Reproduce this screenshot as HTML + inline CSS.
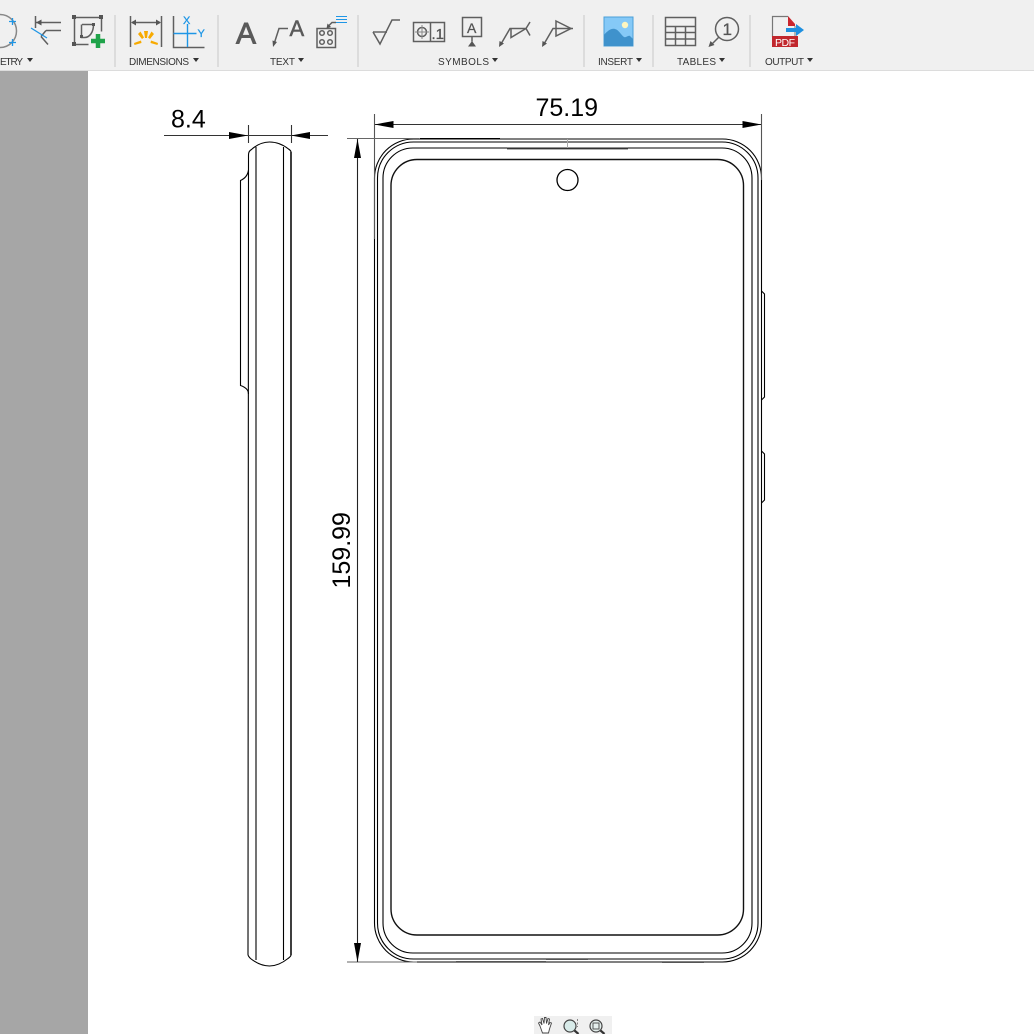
<!DOCTYPE html>
<html>
<head>
<meta charset="utf-8">
<style>
html,body{margin:0;padding:0;background:#fff;width:1034px;height:1034px;overflow:hidden}
svg{display:block}
text{font-family:"Liberation Sans",sans-serif}
.lab{font-size:10px;fill:#333}
.g{fill:none;stroke:#5f5f5f;stroke-width:1.5}
</style>
</head>
<body>
<svg width="1034" height="1034" viewBox="0 0 1034 1034" xmlns="http://www.w3.org/2000/svg">
<rect width="1034" height="1034" fill="#fff"/>
<rect x="0" y="0" width="1034" height="70" fill="#f0f0f0"/>
<rect x="0" y="70" width="1034" height="1" fill="#dcdcdc"/>
<rect x="0" y="71" width="88" height="963" fill="#a6a6a6"/>

<!-- separators -->
<g fill="#dcdcdc">
<rect x="114" y="15" width="2" height="52"/><rect x="217" y="15" width="2" height="52"/><rect x="357" y="15" width="2" height="52"/>
<rect x="583" y="15" width="2" height="52"/><rect x="652" y="15" width="2" height="52"/><rect x="749" y="15" width="2" height="52"/>
</g>

<!-- labels -->
<text class="lab" x="0" y="65" textLength="23">ETRY</text>
<text class="lab" x="129" y="65" textLength="60">DIMENSIONS</text>
<text class="lab" x="270" y="65" textLength="25">TEXT</text>
<text class="lab" x="438" y="65" textLength="51">SYMBOLS</text>
<text class="lab" x="598" y="65" textLength="35">INSERT</text>
<text class="lab" x="677" y="65" textLength="39">TABLES</text>
<text class="lab" x="765" y="65" textLength="39">OUTPUT</text>
<g fill="#333">
<path d="M27 58h6l-3 4z"/><path d="M193 58h6l-3 4z"/><path d="M298 58h6l-3 4z"/><path d="M492 58h6l-3 4z"/>
<path d="M636 58h6l-3 4z"/><path d="M719 58h6l-3 4z"/><path d="M807 58h6l-3 4z"/>
</g>

<!-- geometry icons -->
<circle cx="0" cy="31" r="16.500" fill="none" stroke="#888" stroke-width="1.500"/>
<path d="M12.500 18v7M9 21.500h7M12.500 39v7M9 42.500h7" stroke="#1e96e6" stroke-width="1.300" fill="none"/>
<path d="M35.500 16v12M36 22.500h25M46 30.500h15M46 30.500l-5 6M41 36.500l7 8" class="g"/>
<path d="M36 22.500l5.500-3v6z" fill="#555"/>
<path d="M31 28l16 10" stroke="#1e96e6" stroke-width="1.300"/>
<path d="M74.500 17.500h27v14M74.500 17.500v27h14" class="g"/>
<path d="M82 24.500h11M81.500 24.500v13h3c5 0 9-5 9-13" class="g"/>
<g fill="#555"><rect x="72" y="15" width="4" height="4"/><rect x="99" y="15" width="4" height="4"/><rect x="72" y="42" width="4" height="4"/><rect x="80" y="35" width="3" height="3"/><rect x="92" y="23" width="3" height="3"/></g>
<path d="M91 41h14M98 34v14" stroke="#1fa34a" stroke-width="4.500"/>

<!-- dimensions icons -->
<path d="M130.500 16v31M161.500 16v31M132 22.500h28" class="g"/>
<path d="M131 22.500l5-3v6zM161 22.500l-5-3v6z" fill="#555"/>
<g fill="#f7aa00"><path d="M144 31h4l-1 7h-2z"/><path d="M138 34l2.500-2.500 3.500 6-2 1.500z"/><path d="M154 34l-2.500-2.500-3.500 6 2 1.500z"/><path d="M134 43l7-2.500.5 2.500-7 2z"/><path d="M158 43l-7-2.500-.5 2.500 7 2z"/></g>
<path d="M173.500 16v31.500h31" class="g"/>
<path d="M187.500 24v23M173.500 33.500h23" stroke="#1e96e6" stroke-width="1.400" fill="none"/>
<text x="183" y="24" font-size="11" fill="#1e96e6" stroke="#1e96e6" stroke-width=".3">X</text>
<text x="197.500" y="37" font-size="11" fill="#1e96e6" stroke="#1e96e6" stroke-width=".3">Y</text>

<!-- text icons -->
<text x="236" y="43.500" font-size="30" fill="#5a5a5a" stroke="#5a5a5a" stroke-width=".9">A</text>
<text x="289.500" y="36" font-size="22" fill="#5a5a5a" stroke="#5a5a5a" stroke-width=".5">A</text>
<path d="M288 28.500h-9l-4.500 14" class="g"/>
<path d="M273 47l-.5-6.500 4.500 1.500z" fill="#555"/>
<rect x="317" y="28.500" width="18.500" height="19" class="g"/>
<g class="g"><circle cx="322" cy="33" r="2.300"/><circle cx="330" cy="33" r="2.300"/><circle cx="322" cy="42" r="2.300"/><circle cx="330" cy="42" r="2.300"/></g>
<path d="M336 16.500h11M336 19.500h11M336 22.500h11" stroke="#1e96e6" stroke-width="1"/>
<path d="M336 22.500h-4l-4 4" class="g"/>
<path d="M326.500 28.500l1-5 3.500 3.500z" fill="#555"/>

<!-- symbols -->
<path d="M373 32h14" stroke="#888" stroke-width="2"/>
<path d="M373 32l7 12 12-24h8" class="g"/>
<rect x="413.500" y="22.500" width="31" height="19" class="g"/>
<path d="M430.500 22.500v19" class="g"/>
<circle cx="422" cy="32" r="4.500" class="g"/>
<path d="M422 25v14M415 32h14" stroke="#888" stroke-width="1"/>
<text x="431.500" y="39" font-size="15" fill="#555" stroke="#555" stroke-width=".3">.1</text>
<rect x="462.500" y="17.500" width="19" height="19" class="g"/>
<text x="467" y="33" font-size="14" fill="#555" stroke="#555" stroke-width=".3">A</text>
<path d="M472 36.500v5" class="g"/>
<path d="M468 46.500l4-5.500 4 5.500z" fill="#555"/>
<path d="M501 44l9-15.500h16" class="g"/>
<path d="M499 47l.5-6 4.500 2.500z" fill="#555"/>
<path d="M511 28.500v9l15-9M526 28.500l4-6.500M526 28.500l4 7" class="g"/>
<path d="M544 44l9-15.500h20" class="g"/>
<path d="M542 47l.5-6 4.500 2.500z" fill="#555"/>
<path d="M556 21l15 7.500-15 7.500z" class="g"/>

<!-- insert -->
<rect x="604" y="17" width="29" height="29" fill="#85c9f7" stroke="#4a9fd8"/>
<circle cx="625" cy="25" r="3.200" fill="#fdf6c0"/>
<path d="M604 35c4-5 8-7 11-6 4 1 6 6 9 8 2 1 4-2 6-1l3 3v7h-29z" fill="#3f92cc"/>

<!-- tables -->
<rect x="665.500" y="17.500" width="30" height="28" class="g"/>
<path d="M665.500 26.500h30M665.500 32.500h30M665.500 39h30M675.500 26.500v19M685.500 26.500v19" class="g"/>
<circle cx="727" cy="29" r="11.500" class="g"/>
<text x="722.500" y="35" font-size="17" fill="#555" stroke="#555" stroke-width=".3">1</text>
<path d="M719 37l-8 8" class="g"/>
<path d="M708.500 47l2-6 4 4z" fill="#555"/>

<!-- output -->
<path d="M772.500 37V16.500h15.500" stroke="#777" stroke-width="1.200" fill="none"/>
<path d="M788 16l7 8v2h-7z" fill="#c9252d"/>
<path d="M795 26v10" stroke="#777" stroke-width="1"/>
<rect x="772" y="36" width="26" height="11" fill="#c1272d"/>
<text x="775" y="46" font-size="10.500" fill="#fff" textLength="20">PDF</text>
<path d="M786 28h10v-4l8 6-8 6v-4h-10z" fill="#1e90e0"/>

<!-- side view -->
<g fill="none" stroke="#000" stroke-width="1.100">
<path d="M248.500 155c0-3 1-4.500 3-5.500 5-4.500 11-7.500 18-7.500s14 3 19 7c1.500 1 2.500 2 2.500 3v803c0 1-1 2-3 3.500-5 4-11 7.500-18.500 7.500s-14-3.500-19-7.500c-1.500-1.500-2.500-2.500-2.500-4z"/>
<path d="M248.500 170c-.5 4-2.500 8-8 10.500v205c3 1 8 3 8 8.500"/>
<path d="M256 147v813M283.500 147v813"/>
</g>
<path d="M291 152v803" stroke="#222" stroke-width="1.700"/>

<!-- dim 8.4 -->
<path d="M164 135.500h164M248.500 125v18M291.500 125v18" stroke="#333" stroke-width="1.100" fill="none"/>
<path d="M248 135.500l-19-3.500v7zM291 135.500l19-3.500v7z" fill="#000"/>
<text x="171" y="127.500" font-size="25" fill="#000">8.4</text>

<!-- front view -->
<g fill="none" stroke="#000" stroke-width="1.100">
<rect x="374.500" y="139" width="387" height="823" rx="39" ry="39"/>
<rect x="377.500" y="142" width="380.500" height="817" rx="36" ry="36"/>
<rect x="383" y="148" width="369" height="805" rx="30" ry="30"/>
</g>
<rect x="391" y="159.500" width="352.500" height="775.500" rx="26" ry="26" fill="none" stroke="#111" stroke-width="1.400"/>
<circle cx="567.500" cy="180" r="10.500" fill="none" stroke="#000" stroke-width="1.300"/>
<path d="M420 138.700h80" stroke="#000" stroke-width="1.400"/>
<path d="M507 148.500h121" stroke="#333" stroke-width="1.800"/>
<path d="M567.500 139v9" stroke="#aaa" stroke-width="1"/>
<path d="M456 961.500h90M546 959.500h42M662 962.500h42" stroke="#555" stroke-width="1"/>
<!-- buttons -->
<g fill="none" stroke="#000" stroke-width="1.100">
<path d="M761.500 291l3 3v103l-3 3"/>
<path d="M761.500 451l3 3v46l-3 3"/>
</g>

<!-- dim 75.19 -->
<path d="M374.500 114v125M761.500 114v66" stroke="#555" stroke-width="1.100" fill="none"/>
<path d="M375 124.500h386" stroke="#333" stroke-width="1.100"/>
<path d="M374.500 124.500l19-3.500v7zM761.500 124.500l-19-3.500v7z" fill="#000"/>
<text x="535.500" y="116" font-size="25" fill="#000">75.19</text>

<!-- dim 159.99 -->
<path d="M347 138.500h72M347 962h70" stroke="#666" stroke-width="1.100" fill="none"/>
<path d="M357.500 139v823" stroke="#222" stroke-width="1.100"/>
<path d="M357.500 139l-3.500 19h7zM357.500 962l-3.500-19h7z" fill="#000"/>
<text transform="translate(350 588.500) rotate(-90)" font-size="25" fill="#000">159.99</text>

<!-- bottom nav -->
<rect x="534" y="1016" width="78" height="18" fill="#f0f0f0"/>
<path d="M540 1026l-1.500-3 1.500-1 2 3-1-6 1.500-.5 1.500 5 .5-6h1.500l.5 6 1.500-5 1.500.5-1 6 1.500-2.500 1.500.5-2 6-1 4h-6z" fill="#fff" stroke="#444" stroke-width=".9"/>
<circle cx="570" cy="1026" r="6" fill="#d8ebe9" stroke="#444" stroke-width="1.200"/>
<path d="M574.500 1030.500l4 3.500" stroke="#333" stroke-width="2.200"/>
<path d="M577.500 1019v8" stroke="#888" stroke-width="1" stroke-dasharray="2 1.500"/>
<circle cx="596" cy="1026" r="6" fill="#e4eeec" stroke="#444" stroke-width="1.200"/>
<rect x="593" y="1023" width="6" height="6" fill="none" stroke="#555" stroke-width="1"/>
<path d="M600.500 1030.500l4 3.500" stroke="#333" stroke-width="2.200"/>
</svg>
</body>
</html>
